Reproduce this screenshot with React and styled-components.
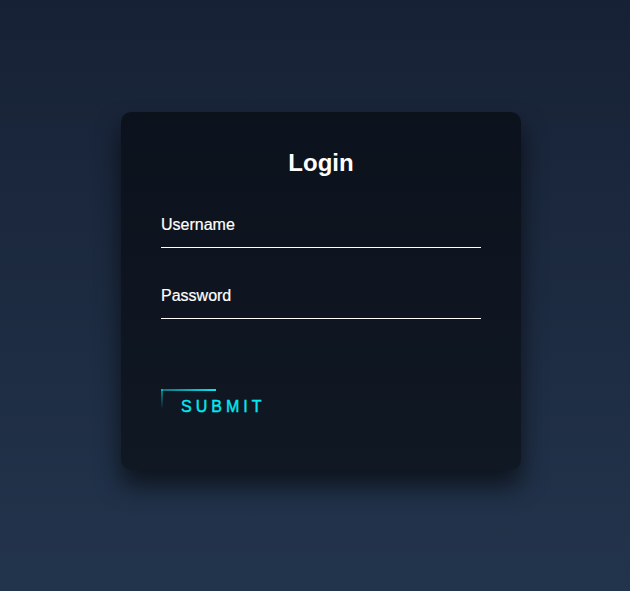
import React, { useState } from 'react';
import styled, { createGlobalStyle } from 'styled-components';

const GlobalStyle = createGlobalStyle`
  html, body {
    margin: 0;
    padding: 0;
  }
  body {
    font-family: "Liberation Sans", Arial, sans-serif;
    background: linear-gradient(#172135, #22344c);
    min-height: 100vh;
  }
`;

const App = () => {
  const [form, setForm] = useState({ username: '', password: '' });

  const handleChange = (e) => {
    const { name, value } = e.target;
    setForm({ ...form, [name]: value });
  };

  return (
    <Page>
      <GlobalStyle />
      <LoginBox onSubmit={(e) => e.preventDefault()}>
        <Title>Login</Title>
        <Field>
          <Label htmlFor="username">Username</Label>
          <Input
            id="username"
            name="username"
            type="text"
            value={form.username}
            onChange={handleChange}
          />
        </Field>
        <Field>
          <Label htmlFor="password">Password</Label>
          <Input
            id="password"
            name="password"
            type="password"
            value={form.password}
            onChange={handleChange}
          />
        </Field>
        <SubmitButton type="submit">
          <TopLine />
          <LeftLine />
          Submit
        </SubmitButton>
      </LoginBox>
    </Page>
  );
};

export default App;

const Page = styled.div`
  min-height: 100vh;
  box-sizing: border-box;
  display: flex;
  justify-content: center;
  align-items: flex-start;
  padding: 112px 0 0 12px;
`;

const LoginBox = styled.form`
  width: 400px;
  box-sizing: border-box;
  padding: 37px 40px 41px;
  display: flex;
  flex-direction: column;
  align-items: stretch;
  background: rgba(0, 0, 0, 0.5);
  border-radius: 10px;
  box-shadow: 0 15px 25px rgba(0, 0, 0, 0.6);
`;

const Title = styled.h2`
  margin: 0 0 38px;
  padding: 0;
  color: #fff;
  font-size: 24px;
  line-height: 28px;
  font-weight: 700;
  text-align: center;
`;

const Field = styled.div`
  display: flex;
  flex-direction: column;
  margin-bottom: 38px;
`;

const Label = styled.label`
  color: #fff;
  font-size: 16px;
  line-height: 20px;
  -webkit-text-stroke: 0.2px #fff;
`;

const Input = styled.input`
  box-sizing: content-box;
  height: 12px;
  padding: 0;
  margin: 0;
  border: none;
  border-bottom: 1px solid #fff;
  background: transparent;
  outline: none;
  color: #fff;
  font-size: 16px;
  font-family: inherit;
`;

const SubmitButton = styled.button`
  position: relative;
  align-self: flex-start;
  margin-top: 32px;
  padding: 8px 16px 12px 20px;
  border: none;
  background: transparent;
  color: #03e9f4;
  font-family: "Liberation Sans", Arial, sans-serif;
  font-size: 16px;
  line-height: 20px;
  letter-spacing: 4px;
  text-transform: uppercase;
  -webkit-text-stroke: 0.4px #03e9f4;
  overflow: hidden;
  cursor: pointer;
`;

const TopLine = styled.span`
  position: absolute;
  top: 0;
  left: 0;
  width: 55px;
  height: 2px;
  background: linear-gradient(90deg, rgba(3, 233, 244, 0.45), #03e9f4);
`;

const LeftLine = styled.span`
  position: absolute;
  top: 0;
  left: 0;
  width: 2px;
  height: 20px;
  background: linear-gradient(180deg, rgba(3, 233, 244, 0.55), rgba(3, 233, 244, 0));
`;
